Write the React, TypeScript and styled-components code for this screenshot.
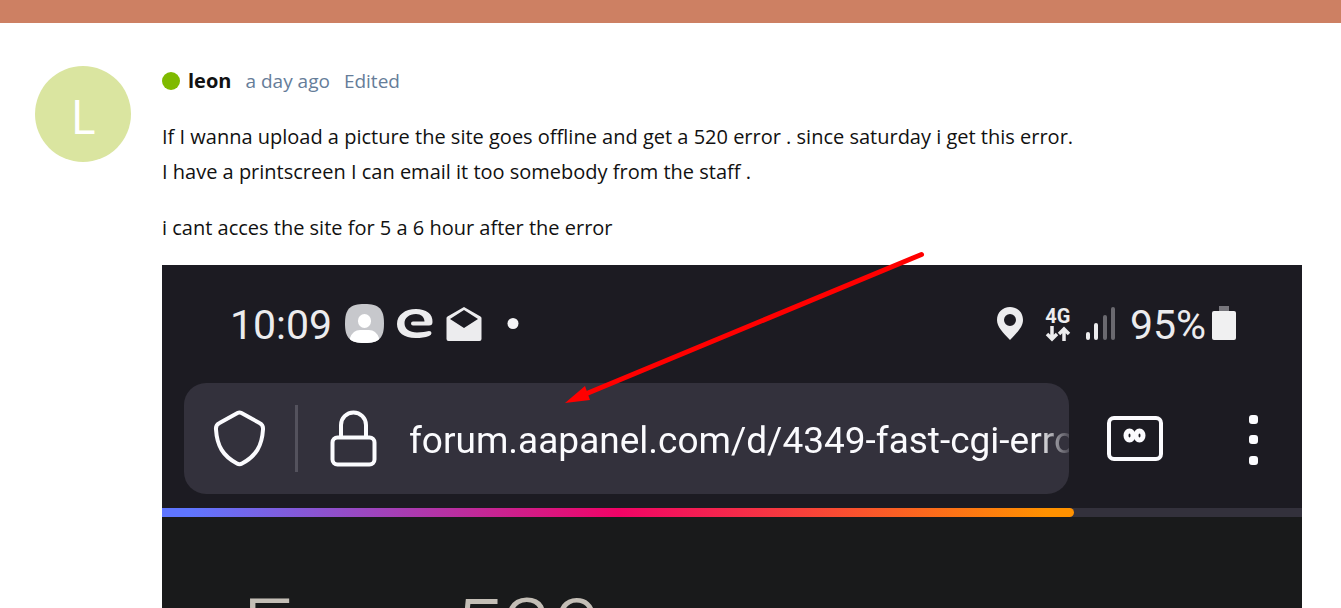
import React from "react";
import styled, { createGlobalStyle } from "styled-components";

const GlobalStyle = createGlobalStyle`
  *, *::before, *::after { box-sizing: border-box; }
  body { margin: 0; background: #fff; color: #111; font-family: "Open Sans", "Noto Sans", sans-serif; }
  svg { display: block; flex: none; }
  button { padding: 0; border: 0; background: none; cursor: pointer; }
`;

const Page = styled.div`
  height: 100vh;
  overflow: hidden;
`;

const TopBar = styled.header`
  height: 23px;
  background: #cd8063;
`;

const Post = styled.article`
  display: flex;
  align-items: flex-start;
  gap: 31px;
  padding: 43px 39px 0 35px;
`;

const Avatar = styled.a`
  flex: none;
  width: 96px;
  height: 96px;
  border-radius: 50%;
  background: #dae5a0;
  color: #fff;
  font-size: 48px;
  line-height: 100px;
  text-align: center;
  text-decoration: none;
`;

const PostMain = styled.div`
  flex: 1;
  min-width: 0;
`;

const PostHeader = styled.div`
  display: flex;
  align-items: center;
  height: 30px;
  font-size: 19px;
  line-height: 30px;
  color: #667d99;
`;

const OnlineDot = styled.span`
  width: 18px;
  height: 18px;
  margin-right: 8px;
  border-radius: 50%;
  background: #7fba00;
`;

const UserName = styled.a`
  margin-right: 14px;
  color: #111;
  font-size: 20px;
  font-weight: 700;
  text-decoration: none;
`;

const PostTime = styled.a`
  margin-right: 14px;
  color: inherit;
  text-decoration: none;
`;

const PostBody = styled.div`
  margin-top: 23px;
  font-size: 20px;
  line-height: 35px;
  p { margin: 0 0 21px; }
  p:last-child { margin-bottom: 20px; }
`;

const Phone = styled.figure`
  position: relative;
  margin: 0;
  background: #1c1b22;
  font-family: Roboto, sans-serif;
  line-height: 1;
`;

const StatusBar = styled.div`
  display: flex;
  justify-content: space-between;
  height: 118px;
  padding: 0 66px 1px 68px;
  color: #ececee;
`;

const StatusGroup = styled.div<{ $gap: number }>`
  display: flex;
  align-items: center;
  gap: ${(p) => p.$gap}px;
`;

const StatusText = styled.span`
  padding-top: 2px;
  font-size: 41px;
  line-height: 48px;
`;

const Network = styled.div`
  display: flex;
  flex-direction: column;
  align-items: center;
  font-size: 20px;
  font-weight: 700;
  line-height: 20px;
`;

const Toolbar = styled.div`
  display: flex;
  align-items: center;
  padding: 0 43px 14px 22px;
`;

const AddressBar = styled.div`
  display: flex;
  align-items: center;
  flex: 1;
  min-width: 0;
  height: 111px;
  padding-left: 29px;
  border-radius: 22px;
  background: #33313c;
`;

const Divider = styled.span`
  flex: none;
  width: 3px;
  height: 67px;
  margin: 0 32px 0 29px;
  background: #54525d;
`;

const UrlInput = styled.input`
  flex: 1;
  min-width: 0;
  height: 60px;
  margin-left: 32px;
  padding: 3px 0 0;
  border: 0;
  outline: 0;
  background: none;
  color: #fbfbfe;
  font: 400 37px/57px Roboto, sans-serif;
  mask-image: linear-gradient(to left, rgba(0, 0, 0, 0.15), #000 32px);
`;

const TabsButton = styled.button`
  margin: 0 84px 0 38px;
`;

const ProgressTrack = styled.div`
  height: 9px;
  background: #33313c;
`;

const ProgressFill = styled.div`
  width: 80%;
  height: 100%;
  border-radius: 0 5px 5px 0;
  background: linear-gradient(90deg, #5f76ff 0%, #5f76ff 3%, #f10366 50%, #ff9100 97%);
`;

const ErrorPage = styled.div`
  padding: 62px 80px;
  background: #191a1b;
  color: #c4beb6;
  font-size: 89px;
  font-weight: 300;
  line-height: 106px;
`;

const Arrow = styled.svg`
  position: absolute;
  left: 0;
  top: 0;
  overflow: visible;
  pointer-events: none;
`;

function LeftStatus() {
  return (
    <StatusGroup $gap={13}>
      <StatusText>10:09</StatusText>
      <svg width="39" height="39" viewBox="0 0 39 39">
        <clipPath id="contact"><path d="M19.500 0C34 0 39 5 39 19.500S34 39 19.500 39 0 34 0 19.500 5 0 19.500 0Z" /></clipPath>
        <g clipPath="url(#contact)">
          <path fill="#c7c8cc" d="M0 0h39v39H0z" />
          <rect x="13" y="10" width="13" height="14" rx="6.500" fill="#fff" />
          <path fill="#fff" d="M5 39V34Q8 26 15 26H24Q31 26 34 34V39Z" />
        </g>
      </svg>
      <svg width="36" height="29" viewBox="0 0 36 29">
        <path fill="#ececee" fillRule="evenodd" d="M19 0C29 0 36 5 35.500 13Q35.500 16.500 32 16.500H16Q14 16.500 14 14.500T16 12.500H27.500C27.500 8 24 5 19 5C12 5 7.500 9 7.500 14C7.500 20 12.500 23.500 20 23.500C25 23.500 29 22.500 32 22Q34.500 22 34.500 24Q34.500 26 32 27C28 28.500 24 29 18.500 29C7 29 0 23.500 0 15C0 6 8 0 19 0Z" />
      </svg>
      <svg width="36" height="34" viewBox="0 0 36 34">
        <path fill="#ececee" fillRule="evenodd" d="M18 0L34.500 9.500Q35.500 10 35.500 11V32Q35.500 34 33.500 34H2.500Q.5 34 .5 32V11Q.5 10 1.500 9.500ZM18 3L4 12L18 21L32 12Z" />
      </svg>
      <svg width="38" height="11" viewBox="0 0 38 11"><circle cx="18" cy="5.500" r="5.500" fill="#f4f4f6" /></svg>
    </StatusGroup>
  );
}

function RightStatus() {
  return (
    <StatusGroup $gap={15}>
      <svg width="34" height="33" viewBox="0 0 34 33">
        <path fill="#ececee" fillRule="evenodd" d="M14 0C21.500 0 27 5.500 27 13C27 20 21 25.500 14 33C7 25.500 1 20 1 13C1 5.500 6.500 0 14 0ZM14 7A6 6 0 1 0 14 19A6 6 0 1 0 14 7Z" />
      </svg>
      <Network>
        4G
        <svg width="26" height="16" viewBox="0 0 26 16" fill="none" stroke="#ececee" strokeWidth="3.500">
          <path d="M7 0V13M2 8L7 13L12 8M19 15V3M14 8L19 3L24 8" />
        </svg>
      </Network>
      <svg width="29" height="33" viewBox="0 0 29 33">
        <rect y="25" width="4" height="8" rx="2" fill="#ececee" />
        <rect x="8" y="16" width="4" height="17" rx="2" fill="#ececee" />
        <rect x="17" y="8" width="4" height="25" rx="2" fill="#6a696f" />
        <rect x="25" y="0" width="4" height="33" rx="2" fill="#6a696f" />
      </svg>
      <StatusGroup $gap={6}>
        <StatusText>95%</StatusText>
        <svg width="24" height="35" viewBox="0 0 24 35">
          <path fill="#77767c" d="M7 0H17V6H7Z" />
          <rect x="0" y="5" width="24" height="29" rx="2" fill="#f0f0f1" />
        </svg>
      </StatusGroup>
    </StatusGroup>
  );
}

export default function App() {
  return (
    <Page>
      <GlobalStyle />
      <TopBar />
      <Post>
        <Avatar href="#leon">L</Avatar>
        <PostMain>
          <PostHeader>
            <OnlineDot />
            <UserName href="#leon">leon</UserName>
            <PostTime href="#post">a day ago</PostTime>
            <span>Edited</span>
          </PostHeader>
          <PostBody>
            <p>
              If I wanna upload a picture the site goes offline and get a 520 error . since saturday i get this error.
              <br />
              I have a printscreen I can email it too somebody from the staff .
            </p>
            <p>i cant acces the site for 5 a 6 hour after the error</p>
          </PostBody>
          <Phone>
            <StatusBar>
              <LeftStatus />
              <RightStatus />
            </StatusBar>
            <Toolbar>
              <AddressBar>
                <svg width="53" height="58" viewBox="0 0 53 58" fill="none" stroke="#fbfbfe" strokeWidth="4">
                  <path d="M24.500 3Q26.500 2 28.500 3L46.500 13Q50.500 15 50 19.500C49 36 43 46 29 53.500Q26.500 55 24 53.500C10 46 4 36 3 19.500Q2.500 15 6.500 13Z" />
                </svg>
                <Divider />
                <svg width="47" height="58" viewBox="0 0 47 58" fill="none" stroke="#fbfbfe" strokeWidth="4">
                  <rect x="2.500" y="27.500" width="42" height="27" rx="5" />
                  <path d="M11 27V15A12.500 12.500 0 0 1 36 15V27" />
                </svg>
                <UrlInput aria-label="Address" readOnly value="forum.aapanel.com/d/4349-fast-cgi-error" />
              </AddressBar>
              <TabsButton aria-label="Tabs">
                <svg width="56" height="46" viewBox="0 0 56 46" fill="none" stroke="#fbfbfe" strokeWidth="4">
                  <rect x="2" y="2" width="52" height="41" rx="5" />
                  <g strokeWidth="5">
                    <ellipse cx="22.500" cy="19.500" rx="3.500" ry="4.500" />
                    <ellipse cx="32.500" cy="19.500" rx="3.500" ry="4.500" />
                  </g>
                </svg>
              </TabsButton>
              <button aria-label="Menu">
                <svg width="12" height="52" viewBox="0 0 12 52" fill="#fbfbfe">
                  <rect x="2" y="2" width="9" height="9" rx="3" />
                  <rect x="2" y="22" width="9" height="9" rx="3" />
                  <rect x="2" y="43" width="9" height="9" rx="3" />
                </svg>
              </button>
            </Toolbar>
            <ProgressTrack>
              <ProgressFill />
            </ProgressTrack>
            <ErrorPage>Error 520</ErrorPage>
            <Arrow width="770" height="150" viewBox="0 0 770 150">
              <path d="M759.500 -10.500L426 128" stroke="#f00" strokeWidth="5" strokeLinecap="round" />
              <path d="M403 138L423 121L428 135Z" fill="#f00" />
            </Arrow>
          </Phone>
        </PostMain>
      </Post>
    </Page>
  );
}
